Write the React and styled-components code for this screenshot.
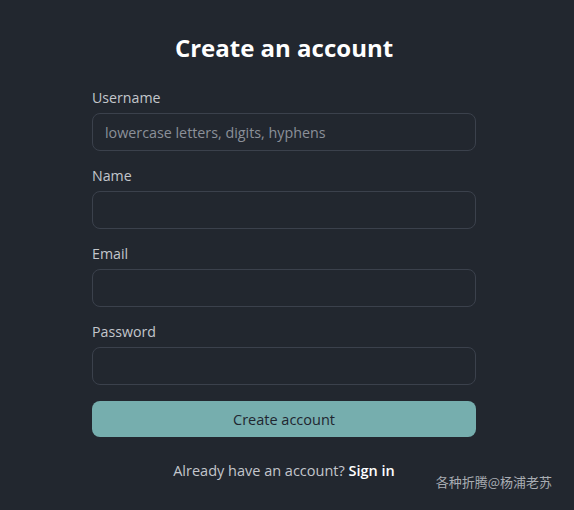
import React from "react";
import styled, { createGlobalStyle } from "styled-components";

const GlobalStyle = createGlobalStyle`
  html, body {
    margin: 0;
    padding: 0;
    background: #22272f;
  }
  * {
    box-sizing: border-box;
  }
`;

const Page = styled.div`
  position: relative;
  min-height: 510px;
  padding: 32px 6px 0 0;
  font-family: "Open Sans", "Noto Sans", sans-serif;
  color: #c9ccd2;
`;

const Form = styled.form`
  width: 384px;
  margin: 0 auto;
  display: flex;
  flex-direction: column;
`;

const Title = styled.h1`
  margin: 0 0 24px;
  font-size: 24px;
  line-height: 32px;
  font-weight: 700;
  text-align: center;
  color: #ffffff;
`;

const Field = styled.div`
  display: flex;
  flex-direction: column;
  margin-bottom: 15px;
`;

const Label = styled.label`
  font-size: 14.2px;
  line-height: 20px;
  margin-bottom: 5px;
  color: #c3c6cc;
`;

const Input = styled.input`
  height: 38px;
  width: 100%;
  padding: 0 12px;
  border: 1px solid #3b414c;
  border-radius: 8px;
  background: transparent;
  outline: none;
  font-family: inherit;
  font-size: 14.3px;
  color: #e6e8ec;
  &::placeholder {
    color: #8b9099;
  }
`;

const Submit = styled.button`
  height: 36px;
  margin-top: 1px;
  border: none;
  border-radius: 8px;
  background: #76aeae;
  font-family: inherit;
  font-size: 14.5px;
  color: #1f2630;
  cursor: pointer;
`;

const Footer = styled.p`
  margin: 24px 0 0;
  font-size: 14.5px;
  line-height: 20px;
  text-align: center;
  color: #c3c6cc;
`;

const SignIn = styled.a`
  color: #ffffff;
  font-weight: 600;
  text-decoration: none;
`;

const Watermark = styled.span`
  position: absolute;
  right: 22px;
  bottom: 19px;
  font-family: "Noto Sans CJK SC", sans-serif;
  font-size: 13px;
  color: #a9adb3;
`;

const fields = [
  { id: "username", label: "Username", placeholder: "lowercase letters, digits, hyphens" },
  { id: "name", label: "Name" },
  { id: "email", label: "Email", type: "email" },
  { id: "password", label: "Password", type: "password" },
];

export default function App() {
  return (
    <>
      <GlobalStyle />
      <Page>
        <Form onSubmit={(e) => e.preventDefault()}>
          <Title>Create an account</Title>
          {fields.map((f) => (
            <Field key={f.id}>
              <Label htmlFor={f.id}>{f.label}</Label>
              <Input id={f.id} type={f.type || "text"} placeholder={f.placeholder} />
            </Field>
          ))}
          <Submit type="submit">Create account</Submit>
          <Footer>
            Already have an account? <SignIn href="#">Sign in</SignIn>
          </Footer>
        </Form>
        <Watermark>各种折腾@杨浦老苏</Watermark>
      </Page>
    </>
  );
}
